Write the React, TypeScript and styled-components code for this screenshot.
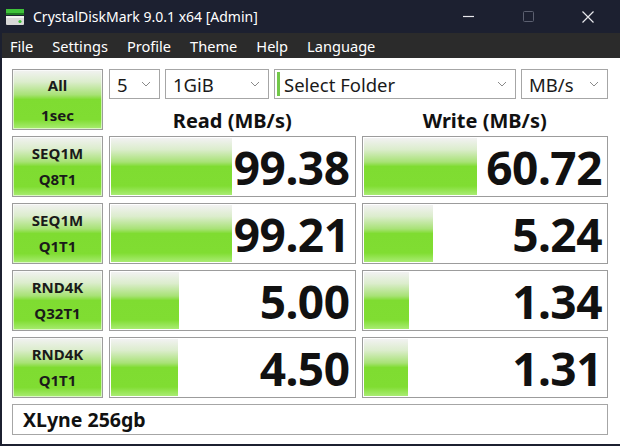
import React from 'react';
import styled, { createGlobalStyle } from 'styled-components';

const GlobalStyle = createGlobalStyle`
  html, body {
    margin: 0;
    padding: 0;
    background: #ffffff;
  }

  body {
    font-family: 'Noto Sans', 'Open Sans', sans-serif;
  }
`;

interface Result {
  name: string;
  sub: string;
  read: string;
  readPct: number;
  write: string;
  writePct: number;
}

const RESULTS: Result[] = [
  { name: 'SEQ1M', sub: 'Q8T1', read: '99.38', readPct: 49.6, write: '60.72', writePct: 46.4 },
  { name: 'SEQ1M', sub: 'Q1T1', read: '99.21', readPct: 49.6, write: '5.24', writePct: 28.5 },
  { name: 'RND4K', sub: 'Q32T1', read: '5.00', readPct: 27.8, write: '1.34', writePct: 18.8 },
  { name: 'RND4K', sub: 'Q1T1', read: '4.50', readPct: 27.5, write: '1.31', writePct: 18.4 }
];

const GREEN = `linear-gradient(to bottom,
  #f2f2f2 0%,
  #dcedcd 20%,
  #a8e276 42%,
  #7fdc31 50%,
  #80dd32 84%,
  #a9ec73 100%)`;

const Window = styled.div`
  width: 620px;
  height: 446px;
  display: flex;
  flex-direction: column;
  box-sizing: border-box;
  border-left: 2px solid #1c2030;
  border-bottom: 2px solid #1c2030;
  background: #ffffff;
  overflow: hidden;
`;

const TitleBar = styled.div`
  height: 33px;
  flex: none;
  display: flex;
  align-items: center;
  background: #1c2030;
  color: #ffffff;
  font-size: 14px;
  padding-left: 3px;
  padding-right: 2px;
`;

const TitleText = styled.span`
  margin-left: 8px;
  flex: 1;
`;

const WinButton = styled.div<{ $dim?: boolean }>`
  width: 60px;
  height: 33px;
  display: flex;
  align-items: center;
  justify-content: center;
  color: ${({ $dim }) => ($dim ? '#5c6070' : '#e8e8ec')};
`;

const MenuBar = styled.div`
  height: 25px;
  flex: none;
  display: flex;
  align-items: center;
  gap: 19px;
  padding-left: 8px;
  background: #2b2b2b;
  color: #ffffff;
  font-size: 14.6px;
`;

const Content = styled.div`
  flex: 1;
  padding: 11px 12px 0 10px;
  display: flex;
  flex-direction: column;
  gap: 6px;
`;

const Grid = styled.div`
  display: grid;
  grid-template-columns: 91px 1fr 1fr;
  grid-template-rows: 30px 25px repeat(4, 61px);
  column-gap: 6px;
  row-gap: 6px;
`;

const GreenButton = styled.div<{ $span?: number }>`
  grid-row: ${({ $span }) => ($span ? `span ${$span}` : 'auto')};
  box-sizing: border-box;
  border: 1px solid #9c9c9c;
  background: ${GREEN};
  display: flex;
  flex-direction: column;
  align-items: center;
  justify-content: center;
  font-weight: 700;
  font-size: 15px;
  line-height: ${({ $span }) => ($span ? '30px' : '25.5px')};
  color: #1a1a1a;
  box-shadow: inset 0 0 0 1px rgba(255, 255, 255, 0.6);
`;

const Controls = styled.div`
  grid-column: 2 / span 2;
  display: flex;
  gap: 5px;
`;

const Combo = styled.div<{ $w?: number; $accent?: boolean }>`
  box-sizing: border-box;
  width: ${({ $w }) => ($w ? `${$w}px` : 'auto')};
  flex: ${({ $w }) => ($w ? 'none' : '1')};
  height: 30px;
  border: 1px solid #a6a6a6;
  background: #ffffff;
  display: flex;
  align-items: center;
  padding: 0 8px 0 ${({ $accent }) => ($accent ? '2px' : '7px')};
  font-size: 18.5px;
  color: #1a1a1a;
`;

const Accent = styled.span`
  width: 3px;
  height: 24px;
  background: #72c84a;
  margin-right: 4px;
`;

const ComboText = styled.span`
  flex: 1;
  white-space: nowrap;
`;

const Header = styled.div`
  display: flex;
  align-items: flex-end;
  justify-content: center;
  font-weight: 700;
  font-size: 20px;
  line-height: 22px;
  color: #111111;
  margin-bottom: -2px;
`;

const Cell = styled.div`
  position: relative;
  box-sizing: border-box;
  border: 1px solid #9c9c9c;
  background: #ffffff;
  display: flex;
  align-items: center;
  justify-content: flex-end;
  padding-right: 5px;
  overflow: hidden;
`;

const Bar = styled.div`
  position: absolute;
  left: 1px;
  top: 1px;
  bottom: 1px;
  background: ${GREEN};
`;

const Value = styled.span`
  position: relative;
  font-weight: 700;
  font-size: 46px;
  line-height: 1;
  color: #111111;
  letter-spacing: -0.5px;
`;

const Footer = styled.div`
  box-sizing: border-box;
  height: 31px;
  border: 1px solid #a6a6a6;
  background: #ffffff;
  display: flex;
  align-items: center;
  padding-left: 10px;
  font-weight: 700;
  font-size: 19.5px;
  color: #111111;
`;

function AppIcon (): React.ReactElement {
  return (
    <svg width='20' height='20' viewBox='0 0 20 20'>
      <rect x='1' y='2' width='18' height='4' fill='#3fc23a' />
      <rect x='1' y='6' width='18' height='2' fill='#1f7a24' />
      <rect x='1' y='9' width='18' height='9' rx='1' fill='#d8d8d8' />
      <rect x='1' y='9' width='18' height='2' fill='#f2f2f2' />
      <circle cx='15' cy='14.5' r='1.6' fill='#3fc23a' />
    </svg>
  );
}

function Chevron (): React.ReactElement {
  return (
    <svg width='10' height='6' viewBox='0 0 10 6'>
      <path d='M1 1 L5 5 L9 1' fill='none' stroke='#8a8a8a' strokeWidth='1' />
    </svg>
  );
}

export default function App (): React.ReactElement {
  return (
    <>
      <GlobalStyle />
      <Window>
        <TitleBar>
          <AppIcon />
          <TitleText>CrystalDiskMark 9.0.1 x64 [Admin]</TitleText>
          <WinButton>
            <svg width='11' height='11' viewBox='0 0 11 11'>
              <path d='M0 5.5 H11' stroke='currentColor' strokeWidth='1.2' />
            </svg>
          </WinButton>
          <WinButton $dim>
            <svg width='11' height='11' viewBox='0 0 11 11'>
              <rect x='0.5' y='0.5' width='10' height='10' rx='1' fill='none' stroke='currentColor' strokeWidth='1' />
            </svg>
          </WinButton>
          <WinButton>
            <svg width='12' height='12' viewBox='0 0 12 12'>
              <path d='M0.5 0.5 L11.5 11.5 M11.5 0.5 L0.5 11.5' stroke='currentColor' strokeWidth='1.2' />
            </svg>
          </WinButton>
        </TitleBar>
        <MenuBar>
          <span>File</span>
          <span>Settings</span>
          <span>Profile</span>
          <span>Theme</span>
          <span>Help</span>
          <span>Language</span>
        </MenuBar>
        <Content>
          <Grid>
            <GreenButton $span={2}>
              <span>All</span>
              <span>1sec</span>
            </GreenButton>
            <Controls>
              <Combo $w={51}><ComboText>5</ComboText><Chevron /></Combo>
              <Combo $w={104}><ComboText>1GiB</ComboText><Chevron /></Combo>
              <Combo $accent><Accent /><ComboText>Select Folder</ComboText><Chevron /></Combo>
              <Combo $w={87}><ComboText>MB/s</ComboText><Chevron /></Combo>
            </Controls>
            <Header>Read (MB/s)</Header>
            <Header>Write (MB/s)</Header>
            {RESULTS.map((r, i) => (
              <React.Fragment key={i}>
                <GreenButton>
                  <span>{r.name}</span>
                  <span>{r.sub}</span>
                </GreenButton>
                <Cell>
                  <Bar style={{ width: `${r.readPct}%` }} />
                  <Value>{r.read}</Value>
                </Cell>
                <Cell>
                  <Bar style={{ width: `${r.writePct}%` }} />
                  <Value>{r.write}</Value>
                </Cell>
              </React.Fragment>
            ))}
          </Grid>
          <Footer>XLyne 256gb</Footer>
        </Content>
      </Window>
    </>
  );
}
